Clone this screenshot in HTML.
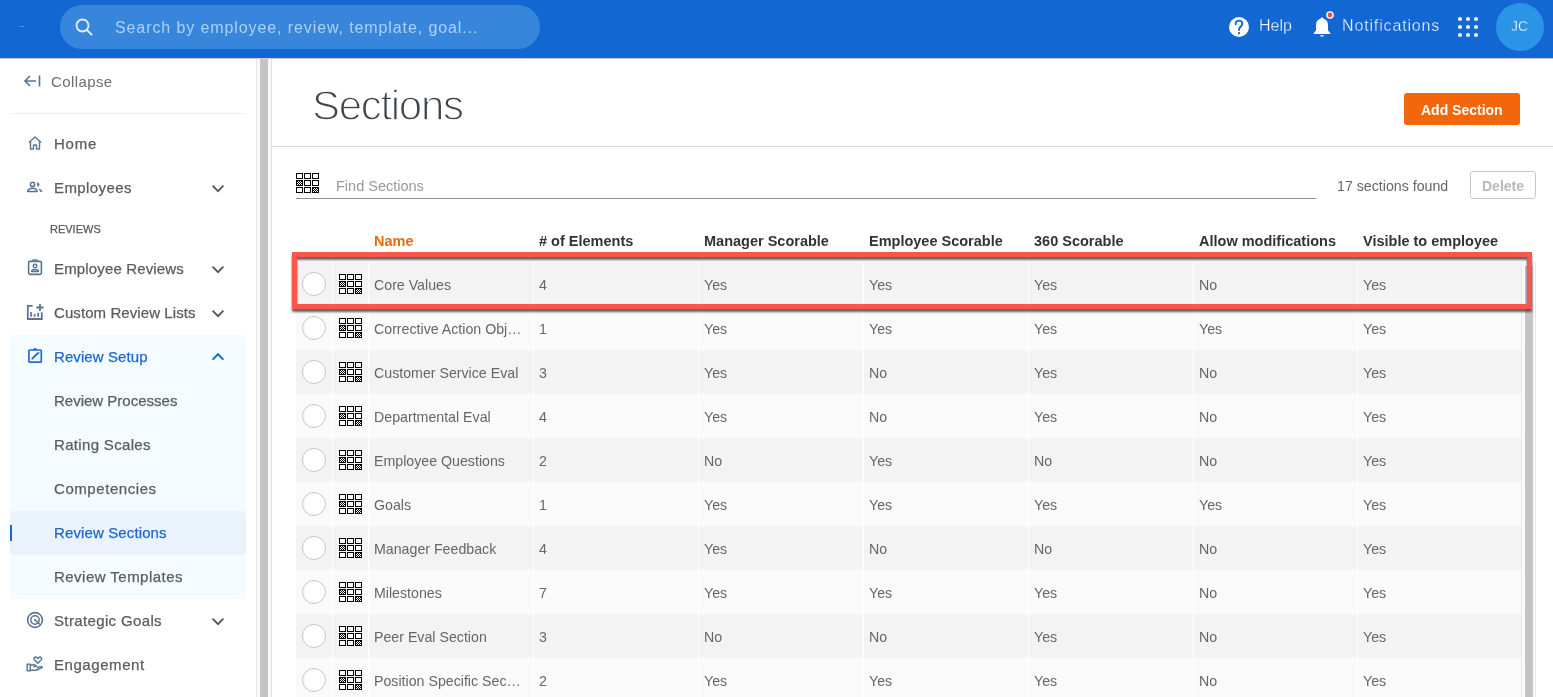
<!DOCTYPE html>
<html><head><meta charset="utf-8">
<style>
*{margin:0;padding:0;box-sizing:border-box}
html,body{width:1553px;height:697px;overflow:hidden;background:#fff;font-family:"Liberation Sans",sans-serif}
.abs{position:absolute}
#top{position:absolute;left:0;top:0;width:1553px;height:58px;background:#1267d3}
#pill{position:absolute;left:60px;top:5px;width:480px;height:44px;border-radius:22px;background:#3786dc}
.ph{will-change:transform;position:absolute;white-space:nowrap;line-height:1}
#side{position:absolute;left:0;top:59px;width:256px;height:638px;background:#fff}
.nav{will-change:transform;position:absolute;left:54px;font-size:15px;color:#5c5c5c;-webkit-text-stroke:0.25px currentColor;white-space:nowrap;line-height:1}
.nav.blue{color:#1b66d2}
.ico{position:absolute}
.chev{position:absolute;left:211px}
#main{position:absolute;left:271px;top:58px;width:1282px;height:639px;background:#fff}
.th{will-change:transform;position:absolute;top:234px;font-size:14.5px;font-weight:bold;color:#333;white-space:nowrap;line-height:1}
.row{position:absolute;left:296px;width:1225px;height:44px}
.cell{position:absolute;top:0;height:44px;border-left:2px solid #fff}
.tx{will-change:transform;position:absolute;font-size:14.2px;color:#666;white-space:nowrap;line-height:1}
</style></head><body>
<div id="top">
  <div class="abs" style="left:19px;top:26px;width:1px;height:1px;background:#7aa3dc"></div><div class="abs" style="left:21px;top:26px;width:1px;height:1px;background:#7aa3dc"></div><div class="abs" style="left:23px;top:26px;width:1px;height:1px;background:#7aa3dc"></div>
  <div id="pill"></div>
  <svg class="abs" style="left:74px;top:17px" width="20" height="20" viewBox="0 0 20 20"><circle cx="8.5" cy="8.5" r="6" fill="none" stroke="#e8eef8" stroke-width="1.8"/><line x1="12.8" y1="12.8" x2="17.5" y2="17.5" stroke="#e8eef8" stroke-width="1.8" stroke-linecap="round"/></svg>
  <div class="ph" style="left:115px;top:20px;font-size:16px;color:#aed0f4;letter-spacing:0.9px">Search by employee, review, template, goal...</div>
  <svg class="abs" style="left:1228px;top:16px" width="22" height="22" viewBox="0 0 22 22"><circle cx="11" cy="11" r="10" fill="#fff"/><path d="M7.6 8.2 C7.6 5.8 9.2 4.6 11 4.6 C12.9 4.6 14.3 5.9 14.3 7.6 C14.3 9.4 12.9 10.2 12 11.4 C11.3 12.3 11 13 11 14" fill="none" stroke="#1366d4" stroke-width="1.9" stroke-linecap="round"/><rect x="10" y="16.2" width="2" height="2" fill="#1366d4"/></svg>
  <div class="ph" style="left:1259px;top:18px;font-size:16px;color:#fff;-webkit-text-stroke:0.35px #1366d4">Help</div>
  <svg class="abs" style="left:1312px;top:10px" width="24" height="28" viewBox="0 0 24 28"><path d="M10 7.2 C11 7.2 11.2 8 11.2 8.6 C14.3 9.4 16 11.8 16 15 L16 20.5 L18.3 23 L18.3 24 L1.8 24 L1.8 23 L4 20.5 L4 15 C4 11.8 5.7 9.4 8.8 8.6 C8.8 8 9 7.2 10 7.2 Z" fill="#fff"/><path d="M7.8 25.2 L12.2 25.2 Q10 28.2 7.8 25.2 Z" fill="#fff"/><circle cx="18" cy="5" r="3.1" fill="#f04c4c" stroke="#fff" stroke-width="1.4"/></svg>
  <div class="ph" style="left:1342px;top:18px;font-size:16px;color:#fff;letter-spacing:0.85px;-webkit-text-stroke:0.35px #1366d4">Notifications</div>
  <svg class="abs" style="left:1456px;top:15px" width="24" height="24" viewBox="0 0 24 24" fill="#f2f4f8"><circle cx="4" cy="4" r="2.1"/><circle cx="12" cy="4" r="2.1"/><circle cx="20" cy="4" r="2.1"/><circle cx="4" cy="12" r="2.1"/><circle cx="12" cy="12" r="2.1"/><circle cx="20" cy="12" r="2.1"/><circle cx="4" cy="20" r="2.1"/><circle cx="12" cy="20" r="2.1"/><circle cx="20" cy="20" r="2.1"/></svg>
  <div class="abs" style="left:1496px;top:3px;width:48px;height:48px;border-radius:24px;background:#2a94e6"></div>
  <div class="ph" style="left:1511px;top:19px;font-size:14px;color:#fff;-webkit-text-stroke:0.3px #2a94e6">JC</div>
</div>
<div class="abs" style="left:0;top:58px;width:1553px;height:1px;background:#c9c9c4"></div>
<div id="side">
</div>
<div class="abs" style="left:256px;top:59px;width:16px;height:638px;background:#f9f9f9;border-left:1px solid #e6e6e6;border-right:1px solid #e0e0e0"></div>
<div class="abs" style="left:260px;top:59px;width:8px;height:638px;background:#c4c4c4"></div>
<!-- sidebar content -->
<svg class="abs" style="left:23px;top:74px" width="18" height="14" viewBox="0 0 18 14"><path d="M7 2 L2 7 L7 12 M2 7 L13 7 M16.5 1.5 L16.5 12.5" fill="none" stroke="#5a7594" stroke-width="1.6"/></svg>
<div class="nav" style="left:51px;top:74px;font-size:15px;letter-spacing:0.4px;color:#6e6e6e;-webkit-text-stroke:0">Collapse</div>
<div class="abs" style="left:10px;top:113px;width:236px;height:1px;background:#eef0f2"></div>

<svg class="abs" style="left:27px;top:135px" width="16" height="16" viewBox="0 0 16 16"><path d="M2 7.5 L8 2 L14 7.5 M3.5 6.5 L3.5 14 L6.5 14 L6.5 10 L9.5 10 L9.5 14 L12.5 14 L12.5 6.5" fill="none" stroke="#5a7594" stroke-width="1.4" stroke-linejoin="round"/></svg>
<div class="nav" style="top:136px;letter-spacing:0.75px">Home</div>

<svg class="abs" style="left:26px;top:180px" width="18" height="14" viewBox="0 0 18 14"><circle cx="6.5" cy="4.4" r="2.1" fill="none" stroke="#5a7594" stroke-width="1.5"/><path d="M1.6 11.4 Q2.4 8.2 6.5 8.2 Q10.6 8.2 11.2 11.4 Z" fill="none" stroke="#5a7594" stroke-width="1.5" stroke-linejoin="round"/><path d="M11.2 2.2 A2.2 2.2 0 0 1 11.2 6.6 Z" fill="#5a7594"/><path d="M12.3 8.6 Q15.8 9.2 16.6 11.8 L14.5 12 Z" fill="#5a7594"/></svg>
<div class="nav" style="top:180px;letter-spacing:0.42px">Employees</div>
<svg class="chev" style="top:183px" width="14" height="10" viewBox="0 0 14 10"><path d="M1.6 2.7 L7 8.1 L12.4 2.7" fill="none" stroke="#585858" stroke-width="1.9"/></svg>

<div class="nav" style="left:50px;top:224px;font-size:11px;color:#5a5a5a">REVIEWS</div>

<svg class="abs" style="left:27px;top:259px" width="16" height="17" viewBox="0 0 16 17"><rect x="1.6" y="2.4" width="12.8" height="13" rx="1.6" fill="none" stroke="#5a7594" stroke-width="1.6"/><path d="M5.8 2.4 L5.8 1.4 Q5.8 0.9 6.3 0.9 L9.7 0.9 Q10.2 0.9 10.2 1.4 L10.2 2.4" fill="none" stroke="#5a7594" stroke-width="1.3"/><circle cx="8" cy="7" r="1.8" fill="none" stroke="#5a7594" stroke-width="1.4"/><path d="M4.6 12.4 Q4.6 10.6 8 10.6 Q11.4 10.6 11.4 12.4 Z" fill="none" stroke="#5a7594" stroke-width="1.5" stroke-linejoin="round"/></svg>
<div class="nav" style="top:261px;letter-spacing:0.15px">Employee Reviews</div>
<svg class="chev" style="top:264px" width="14" height="10" viewBox="0 0 14 10"><path d="M1.6 2.7 L7 8.1 L12.4 2.7" fill="none" stroke="#585858" stroke-width="1.9"/></svg>

<svg class="abs" style="left:26px;top:303px" width="18" height="18" viewBox="0 0 18 18"><path d="M6.6 2.9 L1.8 2.9 L1.8 16 L15.8 16 L15.8 9.2" fill="none" stroke="#5a7594" stroke-width="1.8"/><path d="M14 1 L14 8 M10.4 4.5 L17.6 4.5" fill="none" stroke="#5a7594" stroke-width="1.8"/><path d="M5 9 L5 13.8 M8.6 11 L8.6 13.8 M12.1 9.8 L12.1 13.8" fill="none" stroke="#5a7594" stroke-width="1.7"/></svg>
<div class="nav" style="top:305px;letter-spacing:0.08px">Custom Review Lists</div>
<svg class="chev" style="top:308px" width="14" height="10" viewBox="0 0 14 10"><path d="M1.6 2.7 L7 8.1 L12.4 2.7" fill="none" stroke="#585858" stroke-width="1.9"/></svg>

<div class="abs" style="left:10px;top:335px;width:236px;height:264px;background:#f4fcff;border-radius:4px"></div>
<div class="abs" style="left:10px;top:511px;width:236px;height:44px;background:#eaf2fc;border-radius:4px"></div>
<div class="abs" style="left:10px;top:525px;width:2px;height:16px;background:#1b66d2"></div>
<svg class="abs" style="left:27px;top:347px" width="16" height="17" viewBox="0 0 16 17"><rect x="1.9" y="3" width="12.4" height="12.2" rx="1" fill="none" stroke="#1f6ad4" stroke-width="1.7"/><path d="M6 3.2 Q6.5 1.2 8 1.1 Q9.5 1.2 10 3.2 Z" fill="#1f6ad4"/><path d="M5.3 11.6 L10.3 6.6" stroke="#1f6ad4" stroke-width="2" stroke-linecap="round"/><rect x="10.7" y="5.2" width="1.6" height="1.6" transform="rotate(45 11.5 6)" fill="#1f6ad4"/></svg>
<div class="nav blue" style="top:349px;letter-spacing:0.09px">Review Setup</div>
<svg class="chev" style="top:351px" width="14" height="10" viewBox="0 0 14 10"><path d="M1.6 8.6 L7 3.2 L12.4 8.6" fill="none" stroke="#1b66d2" stroke-width="2"/></svg>

<div class="nav" style="top:393px">Review Processes</div>
<div class="nav" style="top:437px;letter-spacing:0.33px">Rating Scales</div>
<div class="nav" style="top:481px;letter-spacing:0.56px">Competencies</div>
<div class="nav blue" style="top:525px;letter-spacing:0.12px">Review Sections</div>
<div class="nav" style="top:569px;letter-spacing:0.47px">Review Templates</div>

<svg class="abs" style="left:26px;top:611px" width="18" height="18" viewBox="0 0 18 18"><circle cx="9" cy="9" r="7.4" fill="none" stroke="#5a7594" stroke-width="1.6"/><circle cx="9" cy="9" r="4.2" fill="none" stroke="#5a7594" stroke-width="1.5"/><circle cx="9" cy="9" r="1" fill="#5a7594"/><path d="M9 9 L13.8 13.4" stroke="#5a7594" stroke-width="1.5"/></svg>
<div class="nav" style="top:613px;letter-spacing:0.36px">Strategic Goals</div>
<svg class="chev" style="top:616px" width="14" height="10" viewBox="0 0 14 10"><path d="M1.6 2.7 L7 8.1 L12.4 2.7" fill="none" stroke="#585858" stroke-width="1.9"/></svg>

<svg class="abs" style="left:26px;top:656px" width="18" height="17" viewBox="0 0 18 17"><path d="M11.8 7.2 L8.4 3.8 Q7.4 2.6 8.3 1.6 Q9.6 0.5 11 1.6 L11.8 2.4 L12.6 1.6 Q14 0.5 15.3 1.6 Q16.2 2.6 15.2 3.8 Z" fill="none" stroke="#5a7594" stroke-width="1.4" stroke-linejoin="round"/><rect x="1.2" y="8.2" width="3" height="6.6" fill="none" stroke="#5a7594" stroke-width="1.4"/><path d="M4.2 9.2 L8 8.7 Q9.6 8.7 10.6 10.1 L7.4 10.9 M4.2 14.3 L10 14.3 Q11 14.3 12.5 13.4 L16.3 11.3 Q15.6 10.1 14.3 10.6 L10.6 12" fill="none" stroke="#5a7594" stroke-width="1.4" stroke-linejoin="round"/></svg>
<div class="nav" style="top:657px;letter-spacing:0.56px">Engagement</div>
<div class="abs" style="will-change:transform;left:311.5px;top:85px;font-size:42px;color:#3f444b;letter-spacing:-1.3px;-webkit-text-stroke:1.3px #fff;line-height:1;white-space:nowrap">Sections</div>
<div class="abs" style="left:1404px;top:93px;width:116px;height:32px;border-radius:3px;background:#f4660b"></div>
<div class="ph" style="left:1421px;top:103px;font-size:14px;font-weight:bold;color:#fff">Add Section</div>
<div class="abs" style="left:271px;top:146px;width:1282px;height:1px;background:#d3dbe3"></div>
<div class="abs" style="left:296px;top:173px"><svg width="24" height="21" viewBox="0 0 24 21" shape-rendering="crispEdges"><g stroke="#000" stroke-width="1" fill="#fff"><rect x="0.5" y="0.5" width="6" height="5"/><rect x="8.5" y="0.5" width="6" height="5"/><rect x="16.5" y="0.5" width="6" height="5"/><rect x="0.5" y="7.5" width="6" height="5" fill="#000"/><rect x="8.5" y="7.5" width="6" height="5"/><rect x="16.5" y="7.5" width="6" height="5"/><rect x="0.5" y="14.5" width="6" height="5"/><rect x="8.5" y="14.5" width="6" height="5"/><rect x="16.5" y="14.5" width="6" height="5" fill="#000"/></g><g fill="#fff"><rect x="1" y="9" width="1" height="1"/><rect x="1" y="11" width="1" height="1"/><rect x="2" y="8" width="1" height="1"/><rect x="2" y="10" width="1" height="1"/><rect x="3" y="9" width="1" height="1"/><rect x="3" y="11" width="1" height="1"/><rect x="4" y="8" width="1" height="1"/><rect x="4" y="10" width="1" height="1"/><rect x="5" y="9" width="1" height="1"/><rect x="5" y="11" width="1" height="1"/><rect x="17" y="16" width="1" height="1"/><rect x="17" y="18" width="1" height="1"/><rect x="18" y="15" width="1" height="1"/><rect x="18" y="17" width="1" height="1"/><rect x="19" y="16" width="1" height="1"/><rect x="19" y="18" width="1" height="1"/><rect x="20" y="15" width="1" height="1"/><rect x="20" y="17" width="1" height="1"/><rect x="21" y="16" width="1" height="1"/><rect x="21" y="18" width="1" height="1"/></g></svg></div>
<div class="ph" style="left:336px;top:179px;font-size:14.5px;color:#999">Find Sections</div>
<div class="abs" style="left:296px;top:198px;width:1020px;height:1px;background:#8c8c8c"></div>
<div class="ph" style="left:1337px;top:179px;font-size:14.2px;color:#666">17 sections found</div>
<div class="abs" style="left:1470px;top:171px;width:66px;height:28px;border-radius:3px;border:1px solid #c9c9c9;background:#fff"></div>
<div class="ph" style="left:1482px;top:179px;font-size:14px;font-weight:bold;color:#b9b9b9">Delete</div>
<div class="th" style="left:374px;color:#e8690f">Name</div>
<div class="th" style="left:539px;color:#333"># of Elements</div>
<div class="th" style="left:704px;color:#333">Manager Scorable</div>
<div class="th" style="left:869px;color:#333">Employee Scorable</div>
<div class="th" style="left:1034px;color:#333">360 Scorable</div>
<div class="th" style="left:1199px;color:#333">Allow modifications</div>
<div class="th" style="left:1363px;color:#333">Visible to employee</div>
<div class="row" style="top:262px;background:#f3f3f3">
<div class="abs" style="left:36px;top:0;width:1px;height:44px;background:#fff"></div>
<div class="abs" style="left:72px;top:0;width:1px;height:44px;background:#fff"></div>
<div class="abs" style="left:237px;top:0;width:1px;height:44px;background:#fff"></div>
<div class="abs" style="left:402px;top:0;width:1px;height:44px;background:#fff"></div>
<div class="abs" style="left:567px;top:0;width:1px;height:44px;background:#fff"></div>
<div class="abs" style="left:732px;top:0;width:1px;height:44px;background:#fff"></div>
<div class="abs" style="left:897px;top:0;width:1px;height:44px;background:#fff"></div>
<div class="abs" style="left:1061px;top:0;width:1px;height:44px;background:#fff"></div>
<div class="abs" style="left:6px;top:10px;width:24px;height:24px;border-radius:12px;border:1px solid #c6c6c6;background:#fff"></div>
<div class="abs" style="left:43px;top:12px"><svg width="24" height="21" viewBox="0 0 24 21" shape-rendering="crispEdges"><g stroke="#000" stroke-width="1" fill="#fff"><rect x="0.5" y="0.5" width="6" height="5"/><rect x="8.5" y="0.5" width="6" height="5"/><rect x="16.5" y="0.5" width="6" height="5"/><rect x="0.5" y="7.5" width="6" height="5" fill="#000"/><rect x="8.5" y="7.5" width="6" height="5"/><rect x="16.5" y="7.5" width="6" height="5"/><rect x="0.5" y="14.5" width="6" height="5"/><rect x="8.5" y="14.5" width="6" height="5"/><rect x="16.5" y="14.5" width="6" height="5" fill="#000"/></g><g fill="#fff"><rect x="1" y="9" width="1" height="1"/><rect x="1" y="11" width="1" height="1"/><rect x="2" y="8" width="1" height="1"/><rect x="2" y="10" width="1" height="1"/><rect x="3" y="9" width="1" height="1"/><rect x="3" y="11" width="1" height="1"/><rect x="4" y="8" width="1" height="1"/><rect x="4" y="10" width="1" height="1"/><rect x="5" y="9" width="1" height="1"/><rect x="5" y="11" width="1" height="1"/><rect x="17" y="16" width="1" height="1"/><rect x="17" y="18" width="1" height="1"/><rect x="18" y="15" width="1" height="1"/><rect x="18" y="17" width="1" height="1"/><rect x="19" y="16" width="1" height="1"/><rect x="19" y="18" width="1" height="1"/><rect x="20" y="15" width="1" height="1"/><rect x="20" y="17" width="1" height="1"/><rect x="21" y="16" width="1" height="1"/><rect x="21" y="18" width="1" height="1"/></g></svg></div>
<div class="tx" style="left:78px;top:16px">Core Values</div>
<div class="tx" style="left:243px;top:16px">4</div>
<div class="tx" style="left:408px;top:16px">Yes</div>
<div class="tx" style="left:573px;top:16px">Yes</div>
<div class="tx" style="left:738px;top:16px">Yes</div>
<div class="tx" style="left:903px;top:16px">No</div>
<div class="tx" style="left:1067px;top:16px">Yes</div>
</div>
<div class="row" style="top:306px;background:#fafafa">
<div class="abs" style="left:36px;top:0;width:1px;height:44px;background:#fff"></div>
<div class="abs" style="left:72px;top:0;width:1px;height:44px;background:#fff"></div>
<div class="abs" style="left:237px;top:0;width:1px;height:44px;background:#fff"></div>
<div class="abs" style="left:402px;top:0;width:1px;height:44px;background:#fff"></div>
<div class="abs" style="left:567px;top:0;width:1px;height:44px;background:#fff"></div>
<div class="abs" style="left:732px;top:0;width:1px;height:44px;background:#fff"></div>
<div class="abs" style="left:897px;top:0;width:1px;height:44px;background:#fff"></div>
<div class="abs" style="left:1061px;top:0;width:1px;height:44px;background:#fff"></div>
<div class="abs" style="left:6px;top:10px;width:24px;height:24px;border-radius:12px;border:1px solid #c6c6c6;background:#fff"></div>
<div class="abs" style="left:43px;top:12px"><svg width="24" height="21" viewBox="0 0 24 21" shape-rendering="crispEdges"><g stroke="#000" stroke-width="1" fill="#fff"><rect x="0.5" y="0.5" width="6" height="5"/><rect x="8.5" y="0.5" width="6" height="5"/><rect x="16.5" y="0.5" width="6" height="5"/><rect x="0.5" y="7.5" width="6" height="5" fill="#000"/><rect x="8.5" y="7.5" width="6" height="5"/><rect x="16.5" y="7.5" width="6" height="5"/><rect x="0.5" y="14.5" width="6" height="5"/><rect x="8.5" y="14.5" width="6" height="5"/><rect x="16.5" y="14.5" width="6" height="5" fill="#000"/></g><g fill="#fff"><rect x="1" y="9" width="1" height="1"/><rect x="1" y="11" width="1" height="1"/><rect x="2" y="8" width="1" height="1"/><rect x="2" y="10" width="1" height="1"/><rect x="3" y="9" width="1" height="1"/><rect x="3" y="11" width="1" height="1"/><rect x="4" y="8" width="1" height="1"/><rect x="4" y="10" width="1" height="1"/><rect x="5" y="9" width="1" height="1"/><rect x="5" y="11" width="1" height="1"/><rect x="17" y="16" width="1" height="1"/><rect x="17" y="18" width="1" height="1"/><rect x="18" y="15" width="1" height="1"/><rect x="18" y="17" width="1" height="1"/><rect x="19" y="16" width="1" height="1"/><rect x="19" y="18" width="1" height="1"/><rect x="20" y="15" width="1" height="1"/><rect x="20" y="17" width="1" height="1"/><rect x="21" y="16" width="1" height="1"/><rect x="21" y="18" width="1" height="1"/></g></svg></div>
<div class="tx" style="left:78px;top:16px">Corrective Action Obj…</div>
<div class="tx" style="left:243px;top:16px">1</div>
<div class="tx" style="left:408px;top:16px">Yes</div>
<div class="tx" style="left:573px;top:16px">Yes</div>
<div class="tx" style="left:738px;top:16px">Yes</div>
<div class="tx" style="left:903px;top:16px">Yes</div>
<div class="tx" style="left:1067px;top:16px">Yes</div>
</div>
<div class="row" style="top:350px;background:#f3f3f3">
<div class="abs" style="left:36px;top:0;width:1px;height:44px;background:#fff"></div>
<div class="abs" style="left:72px;top:0;width:1px;height:44px;background:#fff"></div>
<div class="abs" style="left:237px;top:0;width:1px;height:44px;background:#fff"></div>
<div class="abs" style="left:402px;top:0;width:1px;height:44px;background:#fff"></div>
<div class="abs" style="left:567px;top:0;width:1px;height:44px;background:#fff"></div>
<div class="abs" style="left:732px;top:0;width:1px;height:44px;background:#fff"></div>
<div class="abs" style="left:897px;top:0;width:1px;height:44px;background:#fff"></div>
<div class="abs" style="left:1061px;top:0;width:1px;height:44px;background:#fff"></div>
<div class="abs" style="left:6px;top:10px;width:24px;height:24px;border-radius:12px;border:1px solid #c6c6c6;background:#fff"></div>
<div class="abs" style="left:43px;top:12px"><svg width="24" height="21" viewBox="0 0 24 21" shape-rendering="crispEdges"><g stroke="#000" stroke-width="1" fill="#fff"><rect x="0.5" y="0.5" width="6" height="5"/><rect x="8.5" y="0.5" width="6" height="5"/><rect x="16.5" y="0.5" width="6" height="5"/><rect x="0.5" y="7.5" width="6" height="5" fill="#000"/><rect x="8.5" y="7.5" width="6" height="5"/><rect x="16.5" y="7.5" width="6" height="5"/><rect x="0.5" y="14.5" width="6" height="5"/><rect x="8.5" y="14.5" width="6" height="5"/><rect x="16.5" y="14.5" width="6" height="5" fill="#000"/></g><g fill="#fff"><rect x="1" y="9" width="1" height="1"/><rect x="1" y="11" width="1" height="1"/><rect x="2" y="8" width="1" height="1"/><rect x="2" y="10" width="1" height="1"/><rect x="3" y="9" width="1" height="1"/><rect x="3" y="11" width="1" height="1"/><rect x="4" y="8" width="1" height="1"/><rect x="4" y="10" width="1" height="1"/><rect x="5" y="9" width="1" height="1"/><rect x="5" y="11" width="1" height="1"/><rect x="17" y="16" width="1" height="1"/><rect x="17" y="18" width="1" height="1"/><rect x="18" y="15" width="1" height="1"/><rect x="18" y="17" width="1" height="1"/><rect x="19" y="16" width="1" height="1"/><rect x="19" y="18" width="1" height="1"/><rect x="20" y="15" width="1" height="1"/><rect x="20" y="17" width="1" height="1"/><rect x="21" y="16" width="1" height="1"/><rect x="21" y="18" width="1" height="1"/></g></svg></div>
<div class="tx" style="left:78px;top:16px">Customer Service Eval</div>
<div class="tx" style="left:243px;top:16px">3</div>
<div class="tx" style="left:408px;top:16px">Yes</div>
<div class="tx" style="left:573px;top:16px">No</div>
<div class="tx" style="left:738px;top:16px">Yes</div>
<div class="tx" style="left:903px;top:16px">No</div>
<div class="tx" style="left:1067px;top:16px">Yes</div>
</div>
<div class="row" style="top:394px;background:#fafafa">
<div class="abs" style="left:36px;top:0;width:1px;height:44px;background:#fff"></div>
<div class="abs" style="left:72px;top:0;width:1px;height:44px;background:#fff"></div>
<div class="abs" style="left:237px;top:0;width:1px;height:44px;background:#fff"></div>
<div class="abs" style="left:402px;top:0;width:1px;height:44px;background:#fff"></div>
<div class="abs" style="left:567px;top:0;width:1px;height:44px;background:#fff"></div>
<div class="abs" style="left:732px;top:0;width:1px;height:44px;background:#fff"></div>
<div class="abs" style="left:897px;top:0;width:1px;height:44px;background:#fff"></div>
<div class="abs" style="left:1061px;top:0;width:1px;height:44px;background:#fff"></div>
<div class="abs" style="left:6px;top:10px;width:24px;height:24px;border-radius:12px;border:1px solid #c6c6c6;background:#fff"></div>
<div class="abs" style="left:43px;top:12px"><svg width="24" height="21" viewBox="0 0 24 21" shape-rendering="crispEdges"><g stroke="#000" stroke-width="1" fill="#fff"><rect x="0.5" y="0.5" width="6" height="5"/><rect x="8.5" y="0.5" width="6" height="5"/><rect x="16.5" y="0.5" width="6" height="5"/><rect x="0.5" y="7.5" width="6" height="5" fill="#000"/><rect x="8.5" y="7.5" width="6" height="5"/><rect x="16.5" y="7.5" width="6" height="5"/><rect x="0.5" y="14.5" width="6" height="5"/><rect x="8.5" y="14.5" width="6" height="5"/><rect x="16.5" y="14.5" width="6" height="5" fill="#000"/></g><g fill="#fff"><rect x="1" y="9" width="1" height="1"/><rect x="1" y="11" width="1" height="1"/><rect x="2" y="8" width="1" height="1"/><rect x="2" y="10" width="1" height="1"/><rect x="3" y="9" width="1" height="1"/><rect x="3" y="11" width="1" height="1"/><rect x="4" y="8" width="1" height="1"/><rect x="4" y="10" width="1" height="1"/><rect x="5" y="9" width="1" height="1"/><rect x="5" y="11" width="1" height="1"/><rect x="17" y="16" width="1" height="1"/><rect x="17" y="18" width="1" height="1"/><rect x="18" y="15" width="1" height="1"/><rect x="18" y="17" width="1" height="1"/><rect x="19" y="16" width="1" height="1"/><rect x="19" y="18" width="1" height="1"/><rect x="20" y="15" width="1" height="1"/><rect x="20" y="17" width="1" height="1"/><rect x="21" y="16" width="1" height="1"/><rect x="21" y="18" width="1" height="1"/></g></svg></div>
<div class="tx" style="left:78px;top:16px">Departmental Eval</div>
<div class="tx" style="left:243px;top:16px">4</div>
<div class="tx" style="left:408px;top:16px">Yes</div>
<div class="tx" style="left:573px;top:16px">No</div>
<div class="tx" style="left:738px;top:16px">Yes</div>
<div class="tx" style="left:903px;top:16px">No</div>
<div class="tx" style="left:1067px;top:16px">Yes</div>
</div>
<div class="row" style="top:438px;background:#f3f3f3">
<div class="abs" style="left:36px;top:0;width:1px;height:44px;background:#fff"></div>
<div class="abs" style="left:72px;top:0;width:1px;height:44px;background:#fff"></div>
<div class="abs" style="left:237px;top:0;width:1px;height:44px;background:#fff"></div>
<div class="abs" style="left:402px;top:0;width:1px;height:44px;background:#fff"></div>
<div class="abs" style="left:567px;top:0;width:1px;height:44px;background:#fff"></div>
<div class="abs" style="left:732px;top:0;width:1px;height:44px;background:#fff"></div>
<div class="abs" style="left:897px;top:0;width:1px;height:44px;background:#fff"></div>
<div class="abs" style="left:1061px;top:0;width:1px;height:44px;background:#fff"></div>
<div class="abs" style="left:6px;top:10px;width:24px;height:24px;border-radius:12px;border:1px solid #c6c6c6;background:#fff"></div>
<div class="abs" style="left:43px;top:12px"><svg width="24" height="21" viewBox="0 0 24 21" shape-rendering="crispEdges"><g stroke="#000" stroke-width="1" fill="#fff"><rect x="0.5" y="0.5" width="6" height="5"/><rect x="8.5" y="0.5" width="6" height="5"/><rect x="16.5" y="0.5" width="6" height="5"/><rect x="0.5" y="7.5" width="6" height="5" fill="#000"/><rect x="8.5" y="7.5" width="6" height="5"/><rect x="16.5" y="7.5" width="6" height="5"/><rect x="0.5" y="14.5" width="6" height="5"/><rect x="8.5" y="14.5" width="6" height="5"/><rect x="16.5" y="14.5" width="6" height="5" fill="#000"/></g><g fill="#fff"><rect x="1" y="9" width="1" height="1"/><rect x="1" y="11" width="1" height="1"/><rect x="2" y="8" width="1" height="1"/><rect x="2" y="10" width="1" height="1"/><rect x="3" y="9" width="1" height="1"/><rect x="3" y="11" width="1" height="1"/><rect x="4" y="8" width="1" height="1"/><rect x="4" y="10" width="1" height="1"/><rect x="5" y="9" width="1" height="1"/><rect x="5" y="11" width="1" height="1"/><rect x="17" y="16" width="1" height="1"/><rect x="17" y="18" width="1" height="1"/><rect x="18" y="15" width="1" height="1"/><rect x="18" y="17" width="1" height="1"/><rect x="19" y="16" width="1" height="1"/><rect x="19" y="18" width="1" height="1"/><rect x="20" y="15" width="1" height="1"/><rect x="20" y="17" width="1" height="1"/><rect x="21" y="16" width="1" height="1"/><rect x="21" y="18" width="1" height="1"/></g></svg></div>
<div class="tx" style="left:78px;top:16px">Employee Questions</div>
<div class="tx" style="left:243px;top:16px">2</div>
<div class="tx" style="left:408px;top:16px">No</div>
<div class="tx" style="left:573px;top:16px">Yes</div>
<div class="tx" style="left:738px;top:16px">No</div>
<div class="tx" style="left:903px;top:16px">No</div>
<div class="tx" style="left:1067px;top:16px">Yes</div>
</div>
<div class="row" style="top:482px;background:#fafafa">
<div class="abs" style="left:36px;top:0;width:1px;height:44px;background:#fff"></div>
<div class="abs" style="left:72px;top:0;width:1px;height:44px;background:#fff"></div>
<div class="abs" style="left:237px;top:0;width:1px;height:44px;background:#fff"></div>
<div class="abs" style="left:402px;top:0;width:1px;height:44px;background:#fff"></div>
<div class="abs" style="left:567px;top:0;width:1px;height:44px;background:#fff"></div>
<div class="abs" style="left:732px;top:0;width:1px;height:44px;background:#fff"></div>
<div class="abs" style="left:897px;top:0;width:1px;height:44px;background:#fff"></div>
<div class="abs" style="left:1061px;top:0;width:1px;height:44px;background:#fff"></div>
<div class="abs" style="left:6px;top:10px;width:24px;height:24px;border-radius:12px;border:1px solid #c6c6c6;background:#fff"></div>
<div class="abs" style="left:43px;top:12px"><svg width="24" height="21" viewBox="0 0 24 21" shape-rendering="crispEdges"><g stroke="#000" stroke-width="1" fill="#fff"><rect x="0.5" y="0.5" width="6" height="5"/><rect x="8.5" y="0.5" width="6" height="5"/><rect x="16.5" y="0.5" width="6" height="5"/><rect x="0.5" y="7.5" width="6" height="5" fill="#000"/><rect x="8.5" y="7.5" width="6" height="5"/><rect x="16.5" y="7.5" width="6" height="5"/><rect x="0.5" y="14.5" width="6" height="5"/><rect x="8.5" y="14.5" width="6" height="5"/><rect x="16.5" y="14.5" width="6" height="5" fill="#000"/></g><g fill="#fff"><rect x="1" y="9" width="1" height="1"/><rect x="1" y="11" width="1" height="1"/><rect x="2" y="8" width="1" height="1"/><rect x="2" y="10" width="1" height="1"/><rect x="3" y="9" width="1" height="1"/><rect x="3" y="11" width="1" height="1"/><rect x="4" y="8" width="1" height="1"/><rect x="4" y="10" width="1" height="1"/><rect x="5" y="9" width="1" height="1"/><rect x="5" y="11" width="1" height="1"/><rect x="17" y="16" width="1" height="1"/><rect x="17" y="18" width="1" height="1"/><rect x="18" y="15" width="1" height="1"/><rect x="18" y="17" width="1" height="1"/><rect x="19" y="16" width="1" height="1"/><rect x="19" y="18" width="1" height="1"/><rect x="20" y="15" width="1" height="1"/><rect x="20" y="17" width="1" height="1"/><rect x="21" y="16" width="1" height="1"/><rect x="21" y="18" width="1" height="1"/></g></svg></div>
<div class="tx" style="left:78px;top:16px">Goals</div>
<div class="tx" style="left:243px;top:16px">1</div>
<div class="tx" style="left:408px;top:16px">Yes</div>
<div class="tx" style="left:573px;top:16px">Yes</div>
<div class="tx" style="left:738px;top:16px">Yes</div>
<div class="tx" style="left:903px;top:16px">Yes</div>
<div class="tx" style="left:1067px;top:16px">Yes</div>
</div>
<div class="row" style="top:526px;background:#f3f3f3">
<div class="abs" style="left:36px;top:0;width:1px;height:44px;background:#fff"></div>
<div class="abs" style="left:72px;top:0;width:1px;height:44px;background:#fff"></div>
<div class="abs" style="left:237px;top:0;width:1px;height:44px;background:#fff"></div>
<div class="abs" style="left:402px;top:0;width:1px;height:44px;background:#fff"></div>
<div class="abs" style="left:567px;top:0;width:1px;height:44px;background:#fff"></div>
<div class="abs" style="left:732px;top:0;width:1px;height:44px;background:#fff"></div>
<div class="abs" style="left:897px;top:0;width:1px;height:44px;background:#fff"></div>
<div class="abs" style="left:1061px;top:0;width:1px;height:44px;background:#fff"></div>
<div class="abs" style="left:6px;top:10px;width:24px;height:24px;border-radius:12px;border:1px solid #c6c6c6;background:#fff"></div>
<div class="abs" style="left:43px;top:12px"><svg width="24" height="21" viewBox="0 0 24 21" shape-rendering="crispEdges"><g stroke="#000" stroke-width="1" fill="#fff"><rect x="0.5" y="0.5" width="6" height="5"/><rect x="8.5" y="0.5" width="6" height="5"/><rect x="16.5" y="0.5" width="6" height="5"/><rect x="0.5" y="7.5" width="6" height="5" fill="#000"/><rect x="8.5" y="7.5" width="6" height="5"/><rect x="16.5" y="7.5" width="6" height="5"/><rect x="0.5" y="14.5" width="6" height="5"/><rect x="8.5" y="14.5" width="6" height="5"/><rect x="16.5" y="14.5" width="6" height="5" fill="#000"/></g><g fill="#fff"><rect x="1" y="9" width="1" height="1"/><rect x="1" y="11" width="1" height="1"/><rect x="2" y="8" width="1" height="1"/><rect x="2" y="10" width="1" height="1"/><rect x="3" y="9" width="1" height="1"/><rect x="3" y="11" width="1" height="1"/><rect x="4" y="8" width="1" height="1"/><rect x="4" y="10" width="1" height="1"/><rect x="5" y="9" width="1" height="1"/><rect x="5" y="11" width="1" height="1"/><rect x="17" y="16" width="1" height="1"/><rect x="17" y="18" width="1" height="1"/><rect x="18" y="15" width="1" height="1"/><rect x="18" y="17" width="1" height="1"/><rect x="19" y="16" width="1" height="1"/><rect x="19" y="18" width="1" height="1"/><rect x="20" y="15" width="1" height="1"/><rect x="20" y="17" width="1" height="1"/><rect x="21" y="16" width="1" height="1"/><rect x="21" y="18" width="1" height="1"/></g></svg></div>
<div class="tx" style="left:78px;top:16px">Manager Feedback</div>
<div class="tx" style="left:243px;top:16px">4</div>
<div class="tx" style="left:408px;top:16px">Yes</div>
<div class="tx" style="left:573px;top:16px">No</div>
<div class="tx" style="left:738px;top:16px">No</div>
<div class="tx" style="left:903px;top:16px">No</div>
<div class="tx" style="left:1067px;top:16px">Yes</div>
</div>
<div class="row" style="top:570px;background:#fafafa">
<div class="abs" style="left:36px;top:0;width:1px;height:44px;background:#fff"></div>
<div class="abs" style="left:72px;top:0;width:1px;height:44px;background:#fff"></div>
<div class="abs" style="left:237px;top:0;width:1px;height:44px;background:#fff"></div>
<div class="abs" style="left:402px;top:0;width:1px;height:44px;background:#fff"></div>
<div class="abs" style="left:567px;top:0;width:1px;height:44px;background:#fff"></div>
<div class="abs" style="left:732px;top:0;width:1px;height:44px;background:#fff"></div>
<div class="abs" style="left:897px;top:0;width:1px;height:44px;background:#fff"></div>
<div class="abs" style="left:1061px;top:0;width:1px;height:44px;background:#fff"></div>
<div class="abs" style="left:6px;top:10px;width:24px;height:24px;border-radius:12px;border:1px solid #c6c6c6;background:#fff"></div>
<div class="abs" style="left:43px;top:12px"><svg width="24" height="21" viewBox="0 0 24 21" shape-rendering="crispEdges"><g stroke="#000" stroke-width="1" fill="#fff"><rect x="0.5" y="0.5" width="6" height="5"/><rect x="8.5" y="0.5" width="6" height="5"/><rect x="16.5" y="0.5" width="6" height="5"/><rect x="0.5" y="7.5" width="6" height="5" fill="#000"/><rect x="8.5" y="7.5" width="6" height="5"/><rect x="16.5" y="7.5" width="6" height="5"/><rect x="0.5" y="14.5" width="6" height="5"/><rect x="8.5" y="14.5" width="6" height="5"/><rect x="16.5" y="14.5" width="6" height="5" fill="#000"/></g><g fill="#fff"><rect x="1" y="9" width="1" height="1"/><rect x="1" y="11" width="1" height="1"/><rect x="2" y="8" width="1" height="1"/><rect x="2" y="10" width="1" height="1"/><rect x="3" y="9" width="1" height="1"/><rect x="3" y="11" width="1" height="1"/><rect x="4" y="8" width="1" height="1"/><rect x="4" y="10" width="1" height="1"/><rect x="5" y="9" width="1" height="1"/><rect x="5" y="11" width="1" height="1"/><rect x="17" y="16" width="1" height="1"/><rect x="17" y="18" width="1" height="1"/><rect x="18" y="15" width="1" height="1"/><rect x="18" y="17" width="1" height="1"/><rect x="19" y="16" width="1" height="1"/><rect x="19" y="18" width="1" height="1"/><rect x="20" y="15" width="1" height="1"/><rect x="20" y="17" width="1" height="1"/><rect x="21" y="16" width="1" height="1"/><rect x="21" y="18" width="1" height="1"/></g></svg></div>
<div class="tx" style="left:78px;top:16px">Milestones</div>
<div class="tx" style="left:243px;top:16px">7</div>
<div class="tx" style="left:408px;top:16px">Yes</div>
<div class="tx" style="left:573px;top:16px">Yes</div>
<div class="tx" style="left:738px;top:16px">Yes</div>
<div class="tx" style="left:903px;top:16px">No</div>
<div class="tx" style="left:1067px;top:16px">Yes</div>
</div>
<div class="row" style="top:614px;background:#f3f3f3">
<div class="abs" style="left:36px;top:0;width:1px;height:44px;background:#fff"></div>
<div class="abs" style="left:72px;top:0;width:1px;height:44px;background:#fff"></div>
<div class="abs" style="left:237px;top:0;width:1px;height:44px;background:#fff"></div>
<div class="abs" style="left:402px;top:0;width:1px;height:44px;background:#fff"></div>
<div class="abs" style="left:567px;top:0;width:1px;height:44px;background:#fff"></div>
<div class="abs" style="left:732px;top:0;width:1px;height:44px;background:#fff"></div>
<div class="abs" style="left:897px;top:0;width:1px;height:44px;background:#fff"></div>
<div class="abs" style="left:1061px;top:0;width:1px;height:44px;background:#fff"></div>
<div class="abs" style="left:6px;top:10px;width:24px;height:24px;border-radius:12px;border:1px solid #c6c6c6;background:#fff"></div>
<div class="abs" style="left:43px;top:12px"><svg width="24" height="21" viewBox="0 0 24 21" shape-rendering="crispEdges"><g stroke="#000" stroke-width="1" fill="#fff"><rect x="0.5" y="0.5" width="6" height="5"/><rect x="8.5" y="0.5" width="6" height="5"/><rect x="16.5" y="0.5" width="6" height="5"/><rect x="0.5" y="7.5" width="6" height="5" fill="#000"/><rect x="8.5" y="7.5" width="6" height="5"/><rect x="16.5" y="7.5" width="6" height="5"/><rect x="0.5" y="14.5" width="6" height="5"/><rect x="8.5" y="14.5" width="6" height="5"/><rect x="16.5" y="14.5" width="6" height="5" fill="#000"/></g><g fill="#fff"><rect x="1" y="9" width="1" height="1"/><rect x="1" y="11" width="1" height="1"/><rect x="2" y="8" width="1" height="1"/><rect x="2" y="10" width="1" height="1"/><rect x="3" y="9" width="1" height="1"/><rect x="3" y="11" width="1" height="1"/><rect x="4" y="8" width="1" height="1"/><rect x="4" y="10" width="1" height="1"/><rect x="5" y="9" width="1" height="1"/><rect x="5" y="11" width="1" height="1"/><rect x="17" y="16" width="1" height="1"/><rect x="17" y="18" width="1" height="1"/><rect x="18" y="15" width="1" height="1"/><rect x="18" y="17" width="1" height="1"/><rect x="19" y="16" width="1" height="1"/><rect x="19" y="18" width="1" height="1"/><rect x="20" y="15" width="1" height="1"/><rect x="20" y="17" width="1" height="1"/><rect x="21" y="16" width="1" height="1"/><rect x="21" y="18" width="1" height="1"/></g></svg></div>
<div class="tx" style="left:78px;top:16px">Peer Eval Section</div>
<div class="tx" style="left:243px;top:16px">3</div>
<div class="tx" style="left:408px;top:16px">No</div>
<div class="tx" style="left:573px;top:16px">No</div>
<div class="tx" style="left:738px;top:16px">Yes</div>
<div class="tx" style="left:903px;top:16px">No</div>
<div class="tx" style="left:1067px;top:16px">Yes</div>
</div>
<div class="row" style="top:658px;background:#fafafa">
<div class="abs" style="left:36px;top:0;width:1px;height:44px;background:#fff"></div>
<div class="abs" style="left:72px;top:0;width:1px;height:44px;background:#fff"></div>
<div class="abs" style="left:237px;top:0;width:1px;height:44px;background:#fff"></div>
<div class="abs" style="left:402px;top:0;width:1px;height:44px;background:#fff"></div>
<div class="abs" style="left:567px;top:0;width:1px;height:44px;background:#fff"></div>
<div class="abs" style="left:732px;top:0;width:1px;height:44px;background:#fff"></div>
<div class="abs" style="left:897px;top:0;width:1px;height:44px;background:#fff"></div>
<div class="abs" style="left:1061px;top:0;width:1px;height:44px;background:#fff"></div>
<div class="abs" style="left:6px;top:10px;width:24px;height:24px;border-radius:12px;border:1px solid #c6c6c6;background:#fff"></div>
<div class="abs" style="left:43px;top:12px"><svg width="24" height="21" viewBox="0 0 24 21" shape-rendering="crispEdges"><g stroke="#000" stroke-width="1" fill="#fff"><rect x="0.5" y="0.5" width="6" height="5"/><rect x="8.5" y="0.5" width="6" height="5"/><rect x="16.5" y="0.5" width="6" height="5"/><rect x="0.5" y="7.5" width="6" height="5" fill="#000"/><rect x="8.5" y="7.5" width="6" height="5"/><rect x="16.5" y="7.5" width="6" height="5"/><rect x="0.5" y="14.5" width="6" height="5"/><rect x="8.5" y="14.5" width="6" height="5"/><rect x="16.5" y="14.5" width="6" height="5" fill="#000"/></g><g fill="#fff"><rect x="1" y="9" width="1" height="1"/><rect x="1" y="11" width="1" height="1"/><rect x="2" y="8" width="1" height="1"/><rect x="2" y="10" width="1" height="1"/><rect x="3" y="9" width="1" height="1"/><rect x="3" y="11" width="1" height="1"/><rect x="4" y="8" width="1" height="1"/><rect x="4" y="10" width="1" height="1"/><rect x="5" y="9" width="1" height="1"/><rect x="5" y="11" width="1" height="1"/><rect x="17" y="16" width="1" height="1"/><rect x="17" y="18" width="1" height="1"/><rect x="18" y="15" width="1" height="1"/><rect x="18" y="17" width="1" height="1"/><rect x="19" y="16" width="1" height="1"/><rect x="19" y="18" width="1" height="1"/><rect x="20" y="15" width="1" height="1"/><rect x="20" y="17" width="1" height="1"/><rect x="21" y="16" width="1" height="1"/><rect x="21" y="18" width="1" height="1"/></g></svg></div>
<div class="tx" style="left:78px;top:16px">Position Specific Sec…</div>
<div class="tx" style="left:243px;top:16px">2</div>
<div class="tx" style="left:408px;top:16px">Yes</div>
<div class="tx" style="left:573px;top:16px">Yes</div>
<div class="tx" style="left:738px;top:16px">Yes</div>
<div class="tx" style="left:903px;top:16px">No</div>
<div class="tx" style="left:1067px;top:16px">Yes</div>
</div>
<div class="abs" style="left:1521px;top:262px;width:15px;height:435px;background:#f9f9f9;border-left:1px solid #e8e8e8;border-right:1px solid #e8e8e8"></div>
<div class="abs" style="left:1525px;top:266px;width:8px;height:431px;background:#c4c4c4"></div>
<div class="abs" style="left:292px;top:252px;width:1240px;height:57px;border:5px solid #f9574b;filter:drop-shadow(0 3px 1.2px rgba(62,68,72,0.82))"></div>
</body></html>
